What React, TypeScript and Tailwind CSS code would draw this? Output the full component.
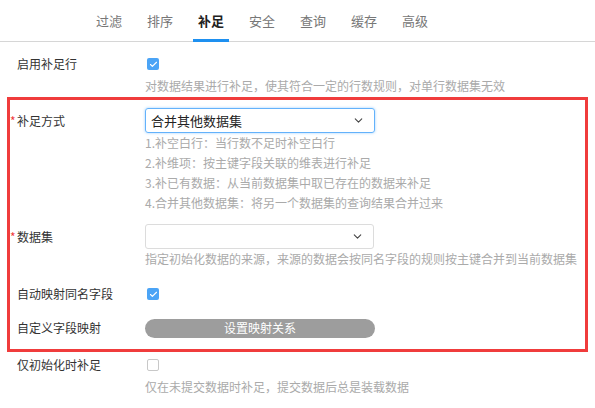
import { ChevronDown, Check } from "lucide-react";

const tabs = ["过滤", "排序", "补足", "安全", "查询", "缓存", "高级"];

function Checkbox({ checked }: { checked: boolean }) {
  return checked ? (
    <span className="ml-[2px] flex h-[12px] w-[12px] items-center justify-center rounded-[2px] bg-[#4ba4f6]">
      <Check size={9} strokeWidth={3} className="text-white" />
    </span>
  ) : (
    <span className="ml-[2px] h-[12px] w-[12px] rounded-[2px] border border-[#c8c8c8] bg-white" />
  );
}

function Label({ text, required }: { text: string; required?: boolean }) {
  return (
    <div className="flex w-[135px] shrink-0 items-center">
      <span className="w-[7px] text-[#f03c3c] text-[12px] leading-none">{required ? "*" : ""}</span>
      <span className="text-[#333] text-[12px]">{text}</span>
    </div>
  );
}

export default function App() {
  return (
    <div
      className="h-[408px] w-[595px] overflow-hidden bg-white text-[12px]"
      style={{ fontFamily: '"Noto Sans CJK SC", "Noto Sans", sans-serif' }}
    >
      <div className="flex h-[42px] gap-[15px] border-b border-[#d6d6d6] pl-[91px]">
        {tabs.map((t) => (
          <div
            key={t}
            className={
              t === "补足"
                ? "-mb-px flex h-[42px] items-center border-b-[3px] border-[#1e90f0] px-[5px] pt-[3px] text-[13px] font-bold text-[#222]"
                : "flex h-[42px] items-center px-[5px] text-[13px] text-[#777]"
            }
          >
            {t}
          </div>
        ))}
      </div>

      <div className="pl-[10px] pt-[10px]">
        <div className="flex h-[24px] items-center">
          <Label text="启用补足行" />
          <Checkbox checked />
        </div>
        <div className="ml-[135px] h-[20px] leading-[20px] text-[#aaa]">
          对数据结果进行补足，使其符合一定的行数规则，对单行数据集无效
        </div>
      </div>

      <div className="mx-[7px] mt-px border-[3px] border-[#f03c3c] pb-[9px] pt-[8px]">
        <div className="flex h-[25px] items-center">
          <Label text="补足方式" required />
          <div className="flex h-[25px] w-[230px] items-center justify-between rounded-[3px] border border-[#63b2fb] pl-[5px] pr-[9px] shadow-[0_0_3px_#9fd0ff]">
            <span className="text-[13px] text-[#222]">合并其他数据集</span>
            <ChevronDown size={13} className="text-[#444]" />
          </div>
        </div>
        <div className="ml-[135px] text-[#aaa]">
          <div className="h-[20px] leading-[20px]">1.补空白行：当行数不足时补空白行</div>
          <div className="h-[20px] leading-[20px]">2.补维项：按主键字段关联的维表进行补足</div>
          <div className="h-[20px] leading-[20px]">3.补已有数据：从当前数据集中取已存在的数据来补足</div>
          <div className="h-[20px] leading-[20px]">4.合并其他数据集：将另一个数据集的查询结果合并过来</div>
        </div>

        <div className="mt-[11px] flex h-[25px] items-center">
          <Label text="数据集" required />
          <div className="flex h-[25px] w-[229px] items-center justify-end rounded-[3px] border border-[#dcdcdc] pr-[9px]">
            <ChevronDown size={13} className="text-[#444]" />
          </div>
        </div>
        <div className="ml-[135px] h-[19px] leading-[19px] text-[#aaa]">
          指定初始化数据的来源，来源的数据会按同名字段的规则按主键合并到当前数据集
        </div>

        <div className="mt-[14px] flex h-[24px] items-center">
          <Label text="自动映射同名字段" />
          <Checkbox checked />
        </div>

        <div className="mt-[10px] flex h-[24px] items-center">
          <Label text="自定义字段映射" />
          <div className="flex h-[19px] w-[230px] items-center justify-center rounded-full bg-[#9d9d9d] text-white">
            设置映射关系
          </div>
        </div>
      </div>

      <div className="pl-[10px] pt-px">
        <div className="flex h-[24px] items-center">
          <Label text="仅初始化时补足" />
          <Checkbox checked={false} />
        </div>
        <div className="ml-[135px] h-[20px] leading-[20px] text-[#aaa]">
          仅在未提交数据时补足，提交数据后总是装载数据
        </div>
      </div>
    </div>
  );
}
